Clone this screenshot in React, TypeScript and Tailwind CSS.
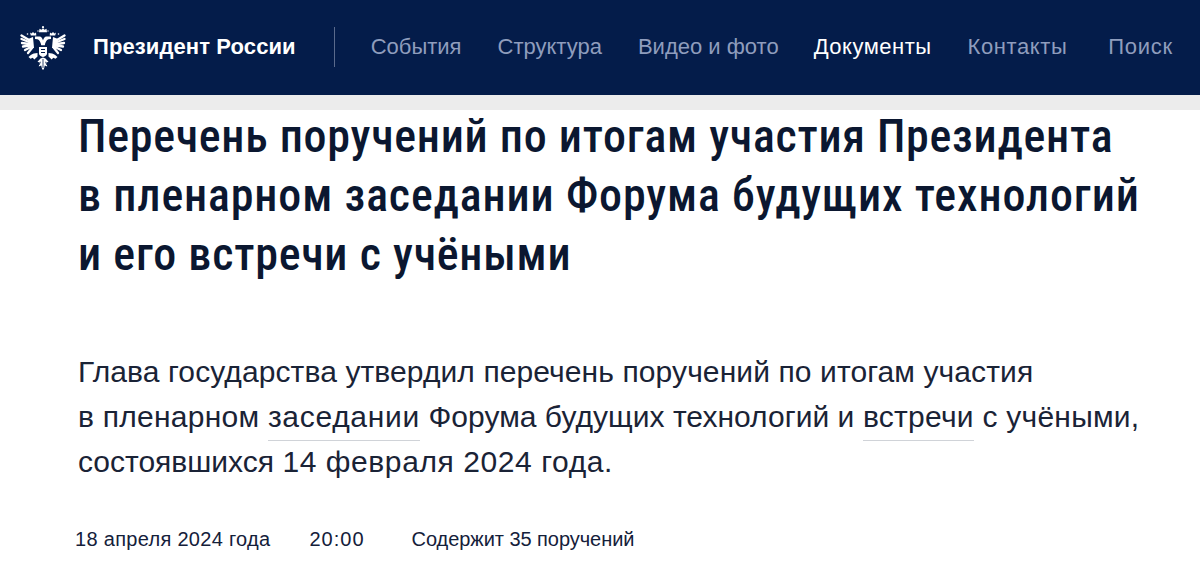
const navItems = [
  { label: "События", className: "ml-[36px] text-[#8f9dbd]" },
  { label: "Структура", className: "ml-[36px] text-[#8f9dbd]" },
  { label: "Видео и фото", className: "ml-[36px] text-[#8f9dbd]" },
  { label: "Документы", className: "ml-[35px] tracking-[0.5px] text-white" },
  { label: "Контакты", className: "ml-[36px] tracking-[0.6px] text-[#8f9dbd]" },
  { label: "Поиск", className: "ml-[41px] tracking-[0.7px] text-[#8f9dbd]" },
];

const Emblem = () => (
  <svg viewBox="0 0 46 44" className="h-[44px] w-[46px]">
    {/* crowns */}
    <g fill="white">
      <circle cx="23" cy="1.2" r="1.1" />
      <path d="M19.500 2.800l2 1 1.500-1.500 1.500 1.500 2-1 .5 3.500h-8z" />
      <path d="M10 6.500l1.500 1 1.500-1.500 1.500 1.500 1.500-1 .3 3h-5.500z" />
      <path d="M36 6.500l-1.500 1-1.500-1.500-1.500 1.500-1.500-1-.3 3h5.500z" />
      <circle cx="7.500" cy="8" r=".8" />
      <circle cx="38.500" cy="8" r=".8" />
      <circle cx="18" cy="5" r=".7" />
      <circle cx="28" cy="5" r=".7" />
    </g>
    {/* wings */}
    <g stroke="white" strokeWidth="2.300" strokeLinecap="round" fill="none">
      <path d="M9 14L1.500 9.500" />
      <path d="M9 16L1.500 13" />
      <path d="M9 18L2 17" />
      <path d="M10 19.500L3 20.500" />
      <path d="M11 21L5 24" />
      <path d="M12 22L8 27" />
      <path d="M37 14L44.500 9.500" />
      <path d="M37 16L44.500 13" />
      <path d="M37 18L44 17" />
      <path d="M36 19.500L43 20.500" />
      <path d="M35 21L41 24" />
      <path d="M34 22L38 27" />
    </g>
    <g fill="white">
      <path d="M8 13l5-2 1 11-4 1z" />
      <path d="M38 13l-5-2-1 11 4 1z" />
      {/* necks as a Y */}
      <path d="M15 10.500h4.500c1.800 0 3 2 3.500 4 .5-2 1.700-4 3.500-4H31v2.500l-2.500.3c-2 .8-3.300 3-3.700 6h-3.600c-.4-3-1.700-5.200-3.700-6L15 13z" />
      {/* shield */}
      <path d="M19 21h8v6.500c0 1.800-2 2.800-4 3.500-2-.7-4-1.700-4-3.500z" />
      {/* legs */}
      <path d="M17.500 27c-2.500 0-5 .7-7 2.200l-2 1.800 2 1.800 2.200-1 1.600 1.700 3.200-3zM28.500 27c2.500 0 5 .7 7 2.200l2 1.800-2 1.800-2.200-1-1.600 1.700-3.200-3z" />
      {/* tail */}
      <path d="M23 31.500l2.500 1 3 3.300-2 .8.700 3.900-2.400-1-1 4h-1.600l-1-4-2.400 1 .7-3.900-2-.8 3-3.300z" />
    </g>
    <path fill="#041c4a" d="M21 23h4v1h-4zM21 26h4v1h-4zM22.600 33h.8v9h-.8zM20 35.500l.7.500-1 3-.7-.5zM26 35.500l-.7.500 1 3 .7-.5z" />
  </svg>
);

export default function App() {
  return (
    <div className="h-[588px] overflow-hidden bg-white font-['Liberation_Sans',sans-serif]">
      <header className="flex h-[95px] items-center bg-[#041c4a] pb-[2px]">
        <div className="ml-[20px] mt-[2px]">
          <Emblem />
        </div>
        <span className="ml-[27px] text-[22px] font-bold tracking-[0.1px] text-white">Президент России</span>
        <div className="ml-[38px] h-[40px] w-px bg-[#5a6a8c]" />
        <nav className="flex text-[22px]">
          {navItems.map((item) => (
            <a key={item.label} className={item.className}>
              {item.label}
            </a>
          ))}
        </nav>
      </header>
      <div className="h-[15px] bg-[#ececec]" />
      <main className="pl-[78px]">
        <h1 className="-mt-[3px] whitespace-nowrap text-[46px] leading-[59px] font-medium text-[#0b1730] font-['Roboto',sans-serif] [font-stretch:85%] tracking-[0.85px]">
          <span className="tracking-[0.74px]">Перечень поручений по итогам участия Президента</span>
          <br />в пленарном заседании Форума будущих технологий
          <br />
          <span className="tracking-[0.77px]">и его встречи с учёными</span>
        </h1>
        <p className="mt-[65px] text-[30px] leading-[45px] text-[#1a2336]">
          <span className="tracking-[0.1px]">Глава государства утвердил перечень поручений по итогам участия</span>
          <br />
          <span className="tracking-[0.25px]">
            в пленарном{" "}
            <span className="border-b border-[#d0d3d8] pb-[7px] tracking-[0.7px]">заседании</span>{" "}
            <span className="tracking-[0.03px]">Форума будущих технологий и</span>{" "}
            <span className="border-b border-[#d0d3d8] pb-[7px]">встречи</span> с учёными,
          </span>
          <br />
          состоявшихся <span className="tracking-[0.58px]">14 февраля 2024 года.</span>
        </p>
        <div className="-ml-[3px] mt-[40px] flex text-[20px] text-[#14203a]">
          <span className="tracking-[0.3px]">18 апреля 2024 года</span>
          <span className="ml-[39px] tracking-[1px]">20:00</span>
          <span className="ml-[47px] tracking-[-0.05px]">Содержит 35 поручений</span>
        </div>
      </main>
    </div>
  );
}
